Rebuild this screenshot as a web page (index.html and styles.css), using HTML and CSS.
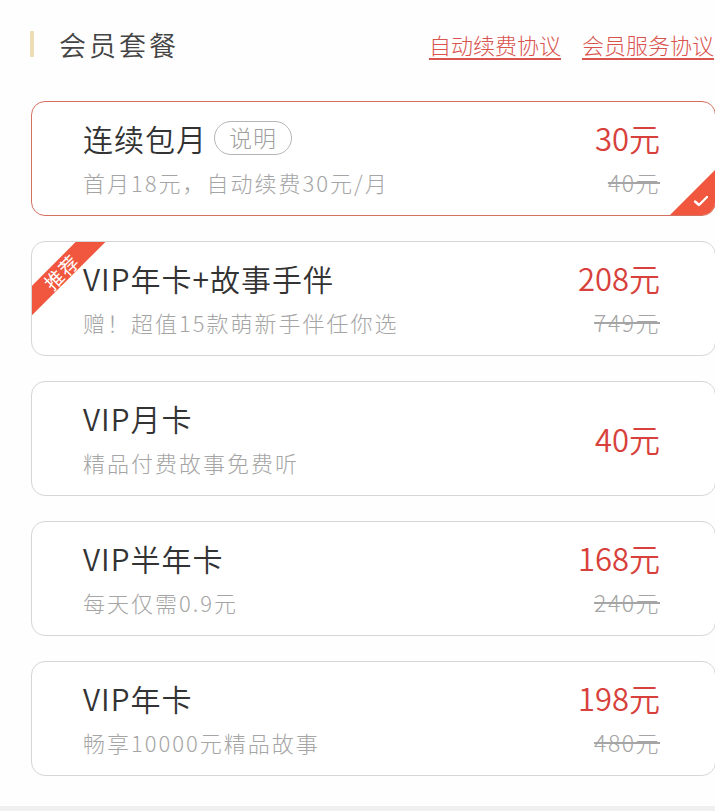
FILE: index.html
```html
<!DOCTYPE html>
<html lang="zh-CN">
<head>
    <meta charset="UTF-8">
    <meta name="viewport" content="width=device-width, initial-scale=1.0">
    <title>会员套餐</title>
    <link rel="stylesheet" href="styles.css">
</head>
<body>
    <div class="page">
        <div class="header">
            <span class="accent"></span>
            <h1 class="title">会员套餐</h1>
            <div class="links">
                <a href="#" class="link">自动续费协议</a>
                <a href="#" class="link">会员服务协议</a>
            </div>
        </div>

        <div class="plans">
            <div class="plan selected">
                <div class="info">
                    <div class="name">连续包月<span class="tag">说明</span></div>
                    <div class="desc">首月18元，自动续费30元/月</div>
                </div>
                <div class="prices">
                    <div class="price">30元</div>
                    <div class="old">40元</div>
                </div>
                <div class="check">
                    <svg width="16" height="12" viewBox="0 0 16 12"><path d="M2 6.5 L6 10 L14 2" fill="none" stroke="#fff" stroke-width="2.4" stroke-linecap="round" stroke-linejoin="round"/></svg>
                </div>
            </div>

            <div class="plan">
                <div class="ribbon">推荐</div>
                <div class="info">
                    <div class="name">VIP年卡+故事手伴</div>
                    <div class="desc">赠！超值15款萌新手伴任你选</div>
                </div>
                <div class="prices">
                    <div class="price">208元</div>
                    <div class="old">749元</div>
                </div>
            </div>

            <div class="plan">
                <div class="info">
                    <div class="name">VIP月卡</div>
                    <div class="desc">精品付费故事免费听</div>
                </div>
                <div class="prices single">
                    <div class="price">40元</div>
                </div>
            </div>

            <div class="plan">
                <div class="info">
                    <div class="name">VIP半年卡</div>
                    <div class="desc">每天仅需0.9元</div>
                </div>
                <div class="prices">
                    <div class="price">168元</div>
                    <div class="old">240元</div>
                </div>
            </div>

            <div class="plan">
                <div class="info">
                    <div class="name">VIP年卡</div>
                    <div class="desc">畅享10000元精品故事</div>
                </div>
                <div class="prices">
                    <div class="price">198元</div>
                    <div class="old">480元</div>
                </div>
            </div>
        </div>
    </div>
    <div class="footer-strip"></div>
</body>
</html>
```

FILE: styles.css
```css
body {
    margin: 0;
    font-family: "Noto Sans CJK SC", "Noto Sans", sans-serif;
    background-color: #fffefe;
    color: #333;
}

.page {
    padding-bottom: 30px;
}

.header {
    display: flex;
    align-items: center;
    height: 88px;
    padding-left: 30px;
}

.accent {
    width: 4px;
    height: 26px;
    background-color: #eedcb4;
    border-radius: 1px;
}

.title {
    margin: 0 0 0 25px;
    font-size: 27px;
    font-weight: 350;
    color: #444;
    letter-spacing: 3px;
}

.links {
    margin-left: auto;
    display: flex;
    gap: 21px;
    margin-right: 1px;
}

.link {
    font-size: 22px;
    font-weight: 300;
    color: #d9534f;
    text-decoration: underline;
    text-underline-offset: 4px;
}

.plans {
    display: flex;
    flex-direction: column;
    gap: 25px;
    margin-top: 13px;
    margin-left: 31px;
    margin-right: -1px;
}

.plan {
    position: relative;
    overflow: hidden;
    box-sizing: border-box;
    height: 115px;
    display: flex;
    justify-content: space-between;
    padding: 18px 55px 0 51px;
    border: 1.5px solid #d6d6d6;
    border-radius: 14px;
    background-color: #fff;
}

.plan.selected {
    border-color: #d4705f;
}

.name {
    display: flex;
    align-items: center;
    font-size: 30px;
    font-weight: 350;
    line-height: 36px;
    color: #333;
    letter-spacing: 1px;
}

.tag {
    margin-left: 7px;
    padding: 0 14px;
    height: 34px;
    line-height: 31px;
    box-sizing: border-box;
    border: 1.5px solid #b5b5b5;
    border-radius: 17px;
    font-size: 23px;
    font-weight: 300;
    color: #9f9f9f;
    letter-spacing: 1px;
}

.desc {
    margin-top: 12px;
    font-size: 22px;
    font-weight: 300;
    line-height: 28px;
    color: #a5a5a5;
    letter-spacing: 2px;
}

.prices {
    text-align: right;
}

.prices.single {
    align-self: center;
    margin-top: -18px;
}

.price {
    font-size: 31px;
    font-weight: 350;
    line-height: 36px;
    color: #d8413b;
}

.old {
    margin-top: 12px;
    font-size: 23px;
    font-weight: 300;
    line-height: 28px;
    color: #a5a5a5;
    letter-spacing: 1.5px;
    text-decoration: line-through;
}

.check {
    position: absolute;
    right: 0;
    bottom: 0;
    width: 45px;
    height: 45px;
    background-color: #f0573e;
    clip-path: polygon(100% 0, 100% 100%, 0 100%);
}

.check svg {
    position: absolute;
    right: 6px;
    bottom: 8px;
}

.ribbon {
    position: absolute;
    left: -31px;
    top: 19px;
    width: 120px;
    height: 21px;
    line-height: 21px;
    transform: rotate(-45deg);
    background-color: #f0573e;
    color: #fff;
    font-size: 19px;
    text-align: center;
    letter-spacing: 1px;
}

.footer-strip {
    height: 6px;
    background-color: #f0f0f0;
}
```
